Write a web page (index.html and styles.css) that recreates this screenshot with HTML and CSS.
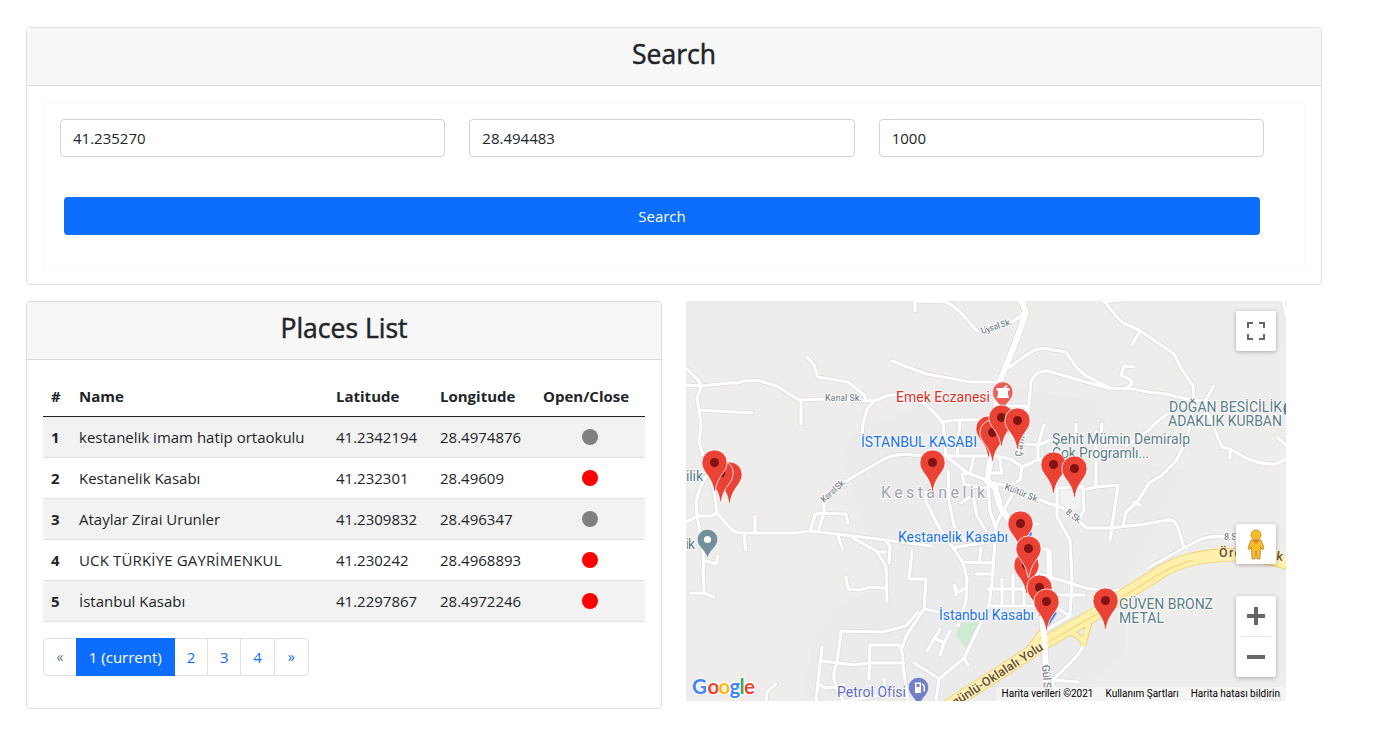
FILE: index.html
```html
<!DOCTYPE html>
<html lang="tr">
<head>
<meta charset="utf-8">
<title>Places</title>
<link rel="stylesheet" href="styles.css">
</head>
<body>
<main class="page">
  <section class="card search-card">
    <header class="card-header"><h3>Search</h3></header>
    <div class="card-body">
      <form class="search-form">
        <div class="inputs">
          <input class="field" type="text" value="41.235270">
          <input class="field" type="text" value="28.494483">
          <input class="field" type="text" value="1000">
        </div>
        <button class="btn" type="button">Search</button>
      </form>
    </div>
  </section>
  <div class="columns">
    <section class="card places-card">
      <header class="card-header"><h3>Places List</h3></header>
      <div class="card-body">
        <table class="places">
          <colgroup><col class="c-num"><col class="c-name"><col class="c-lat"><col class="c-lng"><col class="c-open"></colgroup>
          <thead><tr><th>#</th><th>Name</th><th>Latitude</th><th>Longitude</th><th>Open/Close</th></tr></thead>
          <tbody>
            <tr><th>1</th><td>kestanelik imam hatip ortaokulu</td><td>41.2342194</td><td>28.4974876</td><td><span class="dot"></span></td></tr>
            <tr><th>2</th><td>Kestanelik Kasabı</td><td>41.232301</td><td>28.49609</td><td><span class="dot closed"></span></td></tr>
            <tr><th>3</th><td>Ataylar Zirai Urunler</td><td>41.2309832</td><td>28.496347</td><td><span class="dot"></span></td></tr>
            <tr><th>4</th><td class="caps">UCK TÜRKİYE GAYRİMENKUL</td><td>41.230242</td><td>28.4968893</td><td><span class="dot closed"></span></td></tr>
            <tr><th>5</th><td>İstanbul Kasabı</td><td>41.2297867</td><td>28.4972246</td><td><span class="dot closed"></span></td></tr>
          </tbody>
        </table>
        <nav class="pagination">
          <span class="page-item edge disabled">«</span><span class="page-item active">1 (current)</span><span class="page-item">2</span><span class="page-item">3</span><span class="page-item">4</span><span class="page-item edge">»</span>
        </nav>
      </div>
    </section>
    <section class="map">
      <svg class="map-canvas" width="600" height="400" viewBox="0 0 600 400">
        <defs>
          <g id="pin"><path d="M-.7 28.8C-1.4 22.5-3 18.5-6.6 13.2C-9.7 8.8-12.6 5.5-12.6 0A12.6 12.6 0 0 1 12.6 0C12.6 5.5 9.7 8.8 6.6 13.2C3 18.5 1.4 22.5 .7 28.8Z" fill="#ea4335" stroke="#fff" stroke-width=".8"/><circle r="4.5" fill="#811411"/></g>
          <g id="roads">
            <path d="M0 67L13 80L15 86M0 84L15 85L43 82L52 82L57 80L72 79.5L91 85L108 96L115 99L138 98L188 100L200 95Q215 91 228 97Q244 104 257 122L260 155L280 171L300 179"/>
            <path d="M15 86L11 97L13 110L15 123L13 141L18 158L28 190L31 212M13 109L66 112M115 99V123M121 56L128 64L132 76L162 81L178 94L180 99M188 100L181 108L177 123L176 135"/>
            <path d="M138 213L138 200L150 186L160 180L200 157Q215 151 235 155H262M26 170L19 177L14 187L10 200L11 215L14 230L18 260L17 268L18 290M5 292H18L28 296M18 259L30 263L32 255"/>
            <path d="M0 221L12 215L25 215L31 212L46 229Q50 232 58 232H108L124 230L200 239L245 245M69 215V232M58 232L59.5 249M124 230L129 214L133 212L160 213L162 222M132 230L138 212M152 235L157 249M167 237L190 250L200 265L201 300M191 251H200"/>
            <path d="M160 276L162 288L173 289L185 286L200 287M155 330L196 331L220 325L232 311M155 330L151 362Q145 374 150 385L157 400M136 346L130 400M136 360L168 364L183 362H218M183 378L184 344H212Q217 346 217 365L222 400M132 383L140 387L150 386L158 383M160 400L190 395M90 383L81 391L80 400M198 378L200 390"/>
            <path d="M229 10V0L260 1Q270 6 277 14L292 31M325 21L333 17L337 12M206 60L240 73L285 81H312M322 67L345 51Q356 45 367 49L380 51L390 66L400 75L422 86M341 125L345 80Q351 69 362 70L400 81L422 87L447 88L462 91L480 93L505 99"/>
            <path d="M255 121L270 119H285L298 118L310 112M310 105H340V118M274 120L271 153M288 155L284 172L276 173L278 183L302 188M262 155H310L325 158L336 166L351 159L368 157M313 155L316 172H304M336 166L334 179L320 187M358 124L352 144L352 158L358 161M340 143L352 144L365 139M390 123V142M303 181L318 184L354 199L377 207L392 220L401 227H424L460 223L482 219"/>
            <path d="M418 0L430 15L437 22L453 29L488 53L495 67L507 85L508 98L505 120L500 140L490 160L475 175L463 182L452 200L440 211L437 225M418 1L435-1M454 30L446 44M448 66L438 65L435 74L445 79L446 83L440 87"/>
            <path d="M528 85L519 100L505 99M519 100L524 118L536 146L544 148L560 157Q576 164 590 163L600 158M544 148V157M591 136L600 144M498 105Q480 110 462 130L440 145M416 123L415 135L420 145M410 130V186M371 187L397 186L398 209L392 220M397 189L410 186L432 184L424 239M448 201L454 204M597 0L600 15"/>
            <path d="M482 219Q490 218 493 230L498 247M462 267L498 247L515 238Q527 234 540 236M343 270L367 277L400 287L420 290L434 289"/>
            <path d="M240 190V200L252 225L268 248L277 262L281 278L280 300L272 325M262 170L263 200L268 225L280 240M310 226L309 240L306 280L303 305L278 357L253 378L250 400M278 357L282 364M270 246L310 240M277 261L308 262M295 247L293 262M290 273H308M302 288H345M302 305H350M316 278V305M327 273V305M338 278V305M365 294H398M364 250L365 278M340 223H352M350 248H362V280"/>
            <path d="M275 202L287 194L291 215L300 230M302 185L304 210L309 225L328 190M371 187L371 216L384 239L386 280L384 315L362 328M226 250L223 278H240L238 308L220 335L215 350M200 240L204 245L203 262M238 308L258 312L272 315M241 350L254 328M248 337L258 342L254 354M264 330L258 342M280 287L270 292L268 284M270 294V285M253 378L241 370L228 362M365 303L384 315M397 346L391 355L367 379L370 400M367 379L392 381"/>
          </g>
          <path id="main-road" d="M335-2L340 12L330 40L312 85L309 120L305 156L301 180L309 186L314 206L322 217L343 264L356 310L359 350L362 405"/>
          <path id="highway" d="M262 405L274 397L321 367L357 343L381 329L411 312L441 292L467 276Q483 264 507 258Q530 253 560 254Q580 256 605 263"/>
        </defs>
        <rect width="600" height="400" fill="#eeedec"/>
        <path d="M120 400Q118 330 155 302L200 285L160 170Q150 130 200 120L250 95L320 85L410 100L440 160L500 170L470 230L440 285V350L380 400Z" fill="#ebebec"/>
        <path d="M273 322L293 321L280 347L270 334Z" fill="#ceead0"/>
        <path d="M373 189H396V209H376Z" fill="#f1f2f4"/>
        <g fill="none" stroke-linecap="round" stroke-linejoin="round">
          <use href="#roads" stroke="#dadce3" stroke-width="4.6"/>
          <use href="#main-road" stroke="#dadce3" stroke-width="7.5"/>
          <use href="#roads" stroke="#fff" stroke-width="3.1"/>
        </g>
        <g fill="none">
          <path d="M405 316L397 345M380 331Q391 331 397 341M343 348L357 329" stroke="#f3cf6b" stroke-width="6"/>
          <use href="#highway" stroke="#f3cf6b" stroke-width="13.5"/>
          <use href="#highway" stroke="#fff0ac" stroke-width="11.8"/>
          <path d="M405 314L397 345M379 330Q391 331 397 341M343 348L357 329" stroke="#fff0ac" stroke-width="4.4"/>
          <path d="M262 406L321 368L357 344L411 313L441 293L467 277Q483 266 507 259" stroke="#f3cf6b"/>
          <use href="#main-road" stroke="#fff" stroke-width="6" stroke-linejoin="round"/>
        </g>
        <g class="halo" fill="#5b7d88" font-size="14">
          <text x="0" y="180" textLength="17">ilik</text>
          <text x="0" y="248" textLength="9">ik</text>
          <text x="483" y="111" textLength="113">DOĞAN BESİCİLİK</text>
          <text x="482" y="125" textLength="114">ADAKLIK KURBAN</text>
          <text x="366" y="143" textLength="138">Şehit Mümin Demiralp</text>
          <text x="366" y="157" textLength="97">Çok Programlı...</text>
          <text x="433" y="308" textLength="94">GÜVEN BRONZ</text>
          <text x="433" y="322" textLength="45">METAL</text>
        </g>
        <ellipse cx="600" cy="108" rx="2.5" ry="6" fill="#62868c"/>
        <g class="halo" fill="#1a73e8" font-size="14">
          <text x="175" y="146" textLength="116">İSTANBUL KASABI</text>
          <text x="212" y="241" textLength="110">Kestanelik Kasabı</text>
          <text x="253" y="319" textLength="95">İstanbul Kasabı</text>
        </g>
        <path d="M362 326L371 312L366 309L358 323ZM335 234L345 237L346 231Z" fill="#4285f4"/>
        <text class="halo" x="210" y="101" font-size="14" fill="#d93025" textLength="94">Emek Eczanesi</text>
        <text class="halo" x="195" y="196.5" font-size="16" fill="#a0a5ab" textLength="104">Kestanelik</text>
        <text class="halo" x="151" y="396" font-size="14" fill="#5c6bc0" textLength="69">Petrol Ofisi</text>
        <text class="halo" x="567" y="400" font-size="13" fill="#a0a5ab" textLength="29">Avcı</text>
        <g class="halo" fill="#7d858c" font-size="9" font-weight="500">
          <text x="139" y="100" textLength="37">Kanal Sk.</text>
          <text transform="translate(296 33)rotate(-18)" textLength="32">Uysal Sk.</text>
          <text transform="translate(138 202)rotate(-42)" textLength="30">Kanal Sk.</text>
          <text transform="translate(318 188)rotate(22)" textLength="37">Kültür Sk.</text>
          <text transform="translate(379 212)rotate(38)" textLength="18">8. Sk.</text>
          <text x="538" y="239" textLength="18">8. Sk.</text>
          <text transform="translate(335 156)rotate(-80)" textLength="34">Çamlık</text>
          <text transform="translate(356 364)rotate(86)" font-size="11" textLength="32">Gül Sk.</text>
        </g>
        <g class="road-name" fill="#674d2b" font-size="12.5">
          <text transform="translate(269 406)rotate(-33)" textLength="106">günlü-Oklalalı Yolu</text>
          <text x="533" y="256" textLength="22">Örc</text>
          <text transform="translate(590 259)rotate(8)" textLength="22">kla</text>
        </g>
        <g stroke="#fff" stroke-width=".6">
          <path d="M306.5 91A10.2 10.2 0 1 1 327 91C327 98 321 101 317 108C312 101 306.5 98 306.5 91Z" fill="#e9605a"/>
          <path d="M11.3 238.5A10.2 10.2 0 1 1 31.7 238.5C31.7 246 25 247 21.5 257C18 247 11.3 246 11.3 238.5Z" fill="#728f9b"/>
          <path d="M222.3 386.5A10.2 10.2 0 1 1 242.7 386.5C242.7 393 236 397 232.5 405C229 397 222.3 393 222.3 386.5Z" fill="#7380c7"/>
        </g>
        <circle cx="21.5" cy="238.5" r="3.6" fill="#fff"/>
        <path d="M310.5 87H317L320.5 84L321.7 85L320 87H323.5V89.5L322 90V93L323 97H311L312 93V90L310.5 89.5Z" fill="#fff"/>
        <path d="M229 381.5H235V392H229ZM235.5 384L237.5 385V390.5H239V385L236.5 382" fill="#fff"/><path d="M230.5 383H233.5V386H230.5Z" fill="#7380c7"/>
        <use href="#pin" x="43.5" y="173.5"/><use href="#pin" x="34.7" y="172"/><use href="#pin" x="28.5" y="161.5"/>
        <use href="#pin" x="246.5" y="161.5"/>
        <use href="#pin" x="302.5" y="127.5"/><use href="#pin" x="306.5" y="131.5"/><use href="#pin" x="315.5" y="116.5"/><use href="#pin" x="331.5" y="119.5"/>
        <use href="#pin" x="367.5" y="163.5"/><use href="#pin" x="388.5" y="167.5"/>
        <use href="#pin" x="334.5" y="222.5"/><use href="#pin" x="340.5" y="264"/><use href="#pin" x="342.5" y="247.5"/>
        <use href="#pin" x="353.5" y="286.5"/><use href="#pin" x="360.5" y="300.5"/><use href="#pin" x="419.5" y="299.5"/>
        <text class="google" font-size="20.5" y="393"><tspan x="6" fill="#4285f4">G</tspan><tspan x="21.5" fill="#ea4335">o</tspan><tspan x="32.5" fill="#fbbc04">o</tspan><tspan x="43.5" fill="#4285f4">g</tspan><tspan x="53.5" fill="#34a853">l</tspan><tspan x="58" fill="#ea4335">e</tspan></text>
      </svg>
      <div class="ctl fullscreen"><svg width="18" height="18" viewBox="0 0 18 18"><path d="M1 6V1H6M12 1H17V6M17 12V17H12M6 17H1V12" fill="none" stroke="#666" stroke-width="2"/></svg></div>
      <div class="ctl pegman"><svg width="18" height="31" viewBox="0 0 18 31"><g fill="#fbbc2c" stroke="#a87a1d" stroke-width=".7"><path d="M4 11H14L17 19L15.5 21L13.5 18L13 30H10L9 22L8 30H5L4.5 18L2.5 21L1 19Z"/><circle cx="9" cy="6" r="5"/></g><path d="M5 11H13L9 15Z" fill="#e58233"/></svg></div>
      <div class="ctl zoom"><svg width="40" height="81" viewBox="0 0 40 81"><path d="M11 20H29M20 11V29M11 61H29" stroke="#666" stroke-width="4"/><path d="M5 40.5H35" stroke="#e6e6e6"/></svg></div>
      <div class="legal"><span>Harita verileri ©2021</span><span>Kullanım Şartları</span><span>Harita hatası bildirin</span></div>
    </section>
  </div>
</main>
</body>
</html>
```

FILE: styles.css
```css
* { box-sizing: border-box; }
body { margin: 0; background: #fff; color: #212529; font: 400 16px/24px "Open Sans", "Noto Sans", sans-serif; }
.page { padding: 27px 55px 0 26px; }
.card { border: 1px solid #dfdfdf; border-radius: 4px; background: #fff; }
.card-header { height: 58px; padding: 8px 16px; background: #f7f7f7; border-bottom: 1px solid #d8d8d8; border-radius: 3px 3px 0 0; }
.card-header h3 { margin: 0; font-size: 26.5px; line-height: 36px; font-weight: 500; text-align: center; -webkit-text-stroke: .5px currentColor; }
.card-body { padding: 16px; }
.search-card { height: 258px; }
.search-form { height: 166px; padding: 16px 40px 0 16px; border: 1px solid #f8f9fa; }
.inputs { display: grid; grid-template-columns: repeat(3, 1fr); gap: 24px; }
.field { width: 100%; min-width: 0; height: 38px; padding: 6px 12px; border: 1px solid #ced4da; border-radius: 4px; color: inherit; font: inherit; font-size: 15px; }
.btn { display: block; width: calc(100% - 8px); height: 38px; margin: 40px 4px 0; border: 0; border-radius: 4px; background: #0d6efd; color: #fff; font: inherit; font-size: 15px; }
.columns { display: flex; gap: 24px; margin-top: 16px; }
.places-card { width: 636px; height: 408px; }
.places { width: 602px; table-layout: fixed; border-collapse: collapse; font-size: 15px; }
.places th, .places td { height: 41px; padding: 8px; line-height: 24px; text-align: left; white-space: nowrap; border-bottom: 1px solid #dee2e6; }
.places th { font-weight: 700; }
.places thead th { height: 40px; padding: 8px 8px 7px; border-bottom-color: #212529; }
.places tbody tr:nth-child(odd) { background: #f2f2f2; }
.c-num { width: 28px; } .c-name { width: 257px; } .c-lat { width: 104px; } .c-lng { width: 103px; }
.places td:last-child { text-align: center; }
.places .caps { letter-spacing: .15px; }
.dot { display: inline-block; width: 16px; height: 16px; border-radius: 50%; background: gray; vertical-align: -2px; }
.dot.closed { background: red; }
.pagination { display: flex; margin-top: 16px; width: 266px; height: 38px; border: 1px solid #dee2e6; border-radius: 4px; font-size: 15px; }
.page-item { width: 33.5px; line-height: 36px; text-align: center; color: #0d6efd; border-right: 1px solid #dee2e6; }
.page-item:last-child { border-right: 0; }
.page-item.edge { font-size: 14px; }
.page-item.disabled { width: 32px; color: #6c757d; border: 0; }
.page-item.active { flex: none; width: 99px; height: 38px; margin-top: -1px; line-height: 38px; color: #fff; background: #0d6efd; border: 0; }
.map { position: relative; width: 600px; height: 400px; overflow: hidden; font-family: Roboto, sans-serif; }
.map-canvas { display: block; }
.halo { stroke: #fff; stroke-width: 2px; stroke-opacity: .85; paint-order: stroke; stroke-linejoin: round; }
.road-name { stroke: #fff5cc; stroke-width: 2px; paint-order: stroke; font-weight: 500; }
.google { font-family: Lato, sans-serif; font-weight: 700; stroke: #fff; stroke-width: 2px; paint-order: stroke; }
.ctl { position: absolute; right: 10px; width: 40px; height: 40px; display: flex; align-items: center; justify-content: center; background: #fff; border-radius: 2px; box-shadow: 0 1px 4px rgba(0,0,0,.3); }
.fullscreen { top: 10px; }
.pegman { top: 223px; }
.zoom { top: 295px; height: 81px; }
.legal { position: absolute; right: 0; bottom: 0; display: flex; height: 14px; background: rgba(245,245,245,.75); color: #000; font-size: 10px; line-height: 14px; white-space: nowrap; }
.legal span { padding: 0 6px; }
```
